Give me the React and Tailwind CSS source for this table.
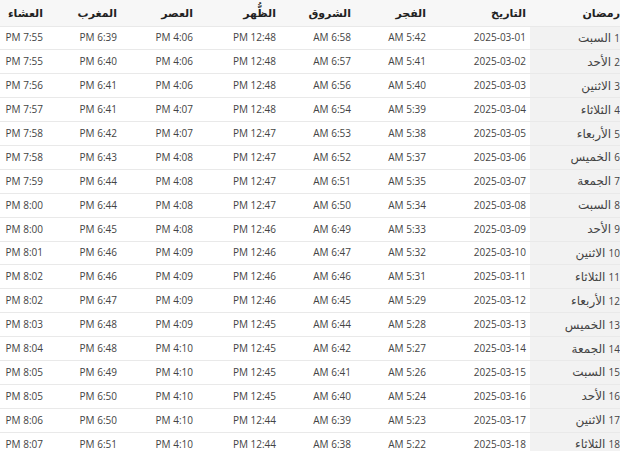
import React from "react";

// أوقات الصلاة - رمضان 1446
const DAYS = ["السبت", "الأحد", "الاثنين", "الثلاثاء", "الأربعاء", "الخميس", "الجمعة"];

const ROWS = [
  ["2025-03-01", "5:42", "6:58", "12:48", "4:06", "6:39", "7:55"],
  ["2025-03-02", "5:41", "6:57", "12:48", "4:06", "6:40", "7:55"],
  ["2025-03-03", "5:40", "6:56", "12:48", "4:06", "6:41", "7:56"],
  ["2025-03-04", "5:39", "6:54", "12:48", "4:07", "6:41", "7:57"],
  ["2025-03-05", "5:38", "6:53", "12:47", "4:07", "6:42", "7:58"],
  ["2025-03-06", "5:37", "6:52", "12:47", "4:08", "6:43", "7:58"],
  ["2025-03-07", "5:35", "6:51", "12:47", "4:08", "6:44", "7:59"],
  ["2025-03-08", "5:34", "6:50", "12:47", "4:08", "6:44", "8:00"],
  ["2025-03-09", "5:33", "6:49", "12:46", "4:08", "6:45", "8:00"],
  ["2025-03-10", "5:32", "6:47", "12:46", "4:09", "6:46", "8:01"],
  ["2025-03-11", "5:31", "6:46", "12:46", "4:09", "6:46", "8:02"],
  ["2025-03-12", "5:29", "6:45", "12:46", "4:09", "6:47", "8:02"],
  ["2025-03-13", "5:28", "6:44", "12:45", "4:09", "6:48", "8:03"],
  ["2025-03-14", "5:27", "6:42", "12:45", "4:10", "6:48", "8:04"],
  ["2025-03-15", "5:26", "6:41", "12:45", "4:10", "6:49", "8:05"],
  ["2025-03-16", "5:24", "6:40", "12:45", "4:10", "6:50", "8:05"],
  ["2025-03-17", "5:23", "6:39", "12:44", "4:10", "6:50", "8:06"],
  ["2025-03-18", "5:22", "6:38", "12:44", "4:10", "6:51", "8:07"],
];

const HEADERS = [
  { label: "رمضان", w: "w-[94px]" },
  { label: "التاريخ", w: "w-[100px]" },
  { label: "الفجر", w: "w-[75px]" },
  { label: "الشروق", w: "w-[75px]" },
  { label: "الظُّهر", w: "w-[83px]" },
  { label: "العصر", w: "w-[76px]" },
  { label: "المغرب", w: "w-[74px]" },
  { label: "العشاء", w: "w-[47px]" },
];

export default function App() {
  return (
    <div className="w-[620px] h-[451px] overflow-hidden bg-white">
      <div dir="rtl" className="w-[624px] font-['Open_Sans','DejaVu_Sans',sans-serif]">
        <table className="w-[624px] table-fixed border-collapse">
          <thead>
            <tr className="h-[26px] bg-[#f7f7f7]">
              {HEADERS.map((h) => (
                <th
                  key={h.label}
                  className={`${h.w} pr-1 text-right text-[11px] font-bold text-[#222]`}
                >
                  {h.label}
                </th>
              ))}
            </tr>
          </thead>
          <tbody>
            {ROWS.map((r, i) => (
              <tr key={r[0]} className="h-[23.9px] border-t border-[#e9e9e9] text-[10px] text-[#444]">
                <td className="pr-1 text-right bg-[#f2f2f2] whitespace-nowrap text-[12px]">
                  <span className="text-[10px]">{i + 1}</span> {DAYS[i % 7]}
                </td>
                <td className="pr-1 text-right">{r[0]}</td>
                <td className="pr-1 text-right">{r[1]} AM</td>
                <td className="pr-1 text-right">{r[2]} AM</td>
                <td className="pr-1 text-right">{r[3]} PM</td>
                <td className="pr-1 text-right">{r[4]} PM</td>
                <td className="pr-1 text-right">{r[5]} PM</td>
                <td className="pr-1 text-right">{r[6]} PM</td>
              </tr>
            ))}
          </tbody>
        </table>
      </div>
    </div>
  );
}
